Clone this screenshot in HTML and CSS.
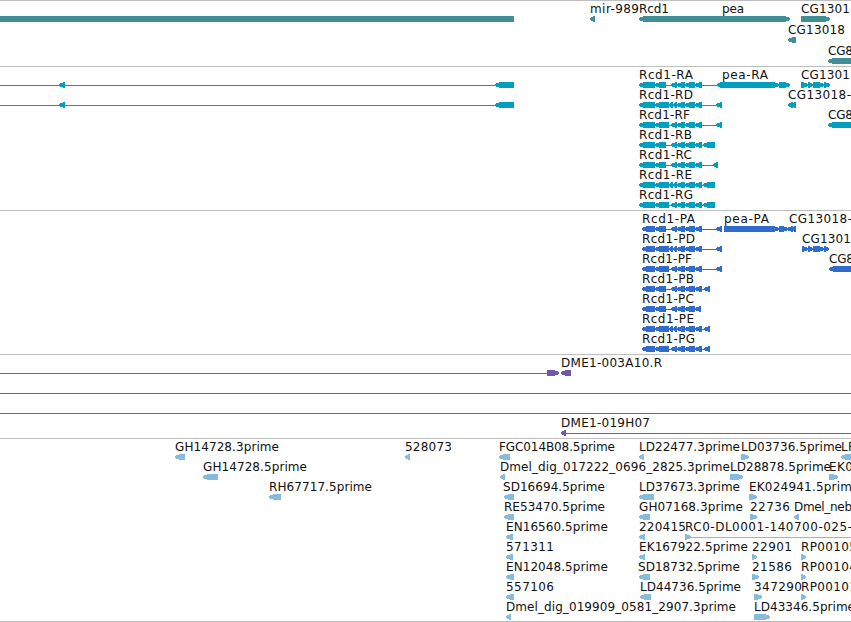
FILE: index.html
```
<!DOCTYPE html>
<html lang="en">
  <head>
    <meta charset="UTF-8" />
    <meta name="viewport" content="width=device-width, initial-scale=1.0" />
    <title>Genome Browser</title>
    <link rel="stylesheet" href="styles.css">
  </head>
  <body>
    <div class="browser" id="browser"></div>
    <script src="tracks.js"></script>
  </body>
</html>
```

FILE: styles.css
```
body {
  margin: 0;
  background-color: #fff;
}
.browser {
  display: flex;
  flex-direction: column;
  width: 851px;
  height: 622px;
  overflow: hidden;
}
.track {
  display: block;
  flex: none;
  width: 851px;
  box-sizing: border-box;
  border-top: 1px solid #bebebe;
  overflow: hidden;
}
.track:last-child {
  border-bottom: 1px solid #bebebe;
}
.track text {
  font-family: "DejaVu Sans", sans-serif;
  font-size: 12px;
  fill: #111;
}
.glyph {
  shape-rendering: crispEdges;
}
.genes .glyph {
  fill: #408f96;
}
.transcripts .glyph {
  fill: #009fbf;
}
.proteins .glyph {
  fill: #306ccd;
}
.clones .glyph {
  fill: #7357a8;
}
.ests .glyph {
  fill: #86bbdd;
}
```

FILE: tracks.js
```
// label: [row, x, text, width]
// span:  [row, start, end, direction]  "<" left, ">" right, "x" both, "=" box
// line:  [row, start, end]
const exonsA = [[655, 666], [671, 677], [677, 685], [685, 695], [695, 702]];
const exonsD = [[655, 669], [669, 673], [673, 677], [677, 685], [685, 695], [695, 702]];
const exonsF = [[655, 669], [671, 677], [677, 685], [685, 695], [695, 702]];

function gene(row, start, exons, last) {
  return [[start, 655], ...exons, last].map(([a, b]) => [row, a, b, "<"]);
}

const tracks = [
  {
    name: "genes",
    height: 66,
    pitch: 21,
    labels: [
      [0, 590, "mir-989", 49], [0, 639, "Rcd1", 30], [0, 722, "pea", 22],
      [0, 801, "CG1301", 49], [1, 788, "CG13018", 57], [2, 828, "CG8", 25],
    ],
    lines: [],
    spans: [
      [0, 0, 514, "="], [0, 590, 595, "<"], [0, 639, 790, "x"],
      [0, 801, 830, ">"], [1, 788, 796, "<"], [2, 828, 870, "<"],
    ],
  },
  {
    name: "transcripts",
    height: 144,
    pitch: 20,
    labels: [
      [0, 639, "Rcd1-RA", 54], [1, 639, "Rcd1-RD", 54], [2, 639, "Rcd1-RF", 51],
      [3, 639, "Rcd1-RB", 53], [4, 639, "Rcd1-RC", 53], [5, 639, "Rcd1-RE", 53],
      [6, 639, "Rcd1-RG", 54], [0, 722, "pea-RA", 46], [0, 801, "CG1301", 49],
      [1, 788, "CG13018-", 63], [2, 828, "CG8", 25],
    ],
    lines: [
      [0, 0, 514], [1, 0, 514], [0, 640, 720], [1, 640, 720], [2, 640, 720],
      [3, 640, 714], [4, 640, 717], [5, 640, 714], [6, 640, 714],
    ],
    spans: [
      [0, 59, 65, "<"], [1, 59, 65, "<"], [0, 495, 514, "<"], [1, 495, 514, "<"],
      ...gene(0, 639, exonsA, [717, 722]),
      ...gene(1, 639, exonsD, [716, 722]),
      ...gene(2, 639, exonsF, [716, 722]),
      ...gene(3, 639, exonsA, [703, 715]),
      ...gene(4, 639, exonsA, [713, 718]),
      ...gene(5, 639, exonsD, [703, 715]),
      ...gene(6, 639, exonsF, [703, 715]),
      [0, 717, 779, "x"], [0, 779, 790, ">"],
      [0, 801, 808, ">"], [0, 808, 813, ">"], [0, 813, 824, ">"], [0, 824, 830, ">"],
      [1, 788, 793, "<"], [1, 792, 796, "<"], [2, 828, 870, "<"],
    ],
  },
  {
    name: "proteins",
    height: 144,
    pitch: 20,
    labels: [
      [0, 642, "Rcd1-PA", 53], [1, 642, "Rcd1-PD", 53], [2, 642, "Rcd1-PF", 50],
      [3, 642, "Rcd1-PB", 52], [4, 642, "Rcd1-PC", 52], [5, 642, "Rcd1-PE", 52],
      [6, 642, "Rcd1-PG", 53], [0, 724, "pea-PA", 45], [0, 789, "CG13018-", 63],
      [1, 802, "CG1301", 49], [2, 829, "CG8", 25],
    ],
    lines: [
      [0, 643, 720], [1, 643, 720], [2, 643, 720], [3, 643, 709],
      [4, 643, 700], [5, 643, 709], [6, 643, 709],
    ],
    spans: [
      ...gene(0, 642, exonsA, [716, 722]),
      ...gene(1, 642, exonsD, [716, 722]),
      ...gene(2, 642, exonsF, [716, 722]),
      ...gene(3, 642, exonsA, [704, 710]),
      ...gene(4, 642, exonsA.slice(0, 4), [695, 701]),
      ...gene(5, 642, exonsD, [704, 710]),
      ...gene(6, 642, exonsF, [704, 710]),
      [0, 724, 779, ">"], [0, 779, 788, ">"], [0, 787, 793, "<"], [0, 791, 796, "<"],
      [1, 802, 808, ">"], [1, 808, 813, ">"], [1, 813, 824, ">"], [1, 824, 829, ">"],
      [2, 829, 870, "<"],
    ],
  },
  {
    name: "clones",
    height: 84,
    pitch: 20,
    labels: [[0, 561, "DME1-003A10.R", 101], [3, 561, "DME1-019H07", 89]],
    lines: [[0, 0, 547], [1, 0, 851], [2, 0, 851], [3, 561, 851]],
    spans: [[0, 547, 559, ">"], [0, 561, 571, "<"], [3, 561, 566, "<"]],
  },
  {
    name: "ests",
    height: 184,
    pitch: 20,
    labels: [
      [0, 175, "GH14728.3prime", 104], [1, 203, "GH14728.5prime", 104],
      [2, 269, "RH67717.5prime", 103], [0, 405, "528073", 47],
      [0, 499, "FGC014B08.5prime", 116], [1, 500, "Dmel_dig_017222_0696_2825.3prime", 230],
      [2, 503, "SD16694.5prime", 102], [3, 504, "RE53470.5prime", 101],
      [4, 506, "EN16560.5prime", 102], [5, 506, "571311", 48],
      [6, 506, "EN12048.5prime", 102], [7, 506, "557106", 48],
      [8, 506, "Dmel_dig_019909_0581_2907.3prime", 230],
      [0, 639, "LD22477.3prime", 101], [0, 741, "LD03736.5prime", 101], [0, 841, "LF", 14],
      [1, 730, "LD28878.5prime", 101], [1, 829, "EK0", 24],
      [2, 639, "LD37673.3prime", 101], [2, 749, "EK024941.5prim", 103],
      [3, 639, "GH07168.3prime", 104], [3, 750, "22736", 40], [3, 794, "Dmel_neb", 58],
      [4, 639, "220415", 47], [4, 685, "RC0-DL0001-140700-025-", 167],
      [5, 639, "EK167922.5prime", 109], [5, 752, "22901", 40], [5, 801, "RP00105", 56],
      [6, 638, "SD18732.5prime", 102], [6, 752, "21586", 40], [6, 801, "RP00104", 56],
      [7, 640, "LD44736.5prime", 101], [7, 754, "347290", 48], [7, 801, "RP00101", 56],
      [8, 754, "LD43346.5prime", 101],
    ],
    lines: [[4, 690, 851]],
    spans: [
      [0, 175, 185, "<"], [1, 203, 218, "<"], [2, 269, 281, "<"], [0, 405, 410, "<"],
      [0, 499, 510, "<"], [1, 500, 505, "<"], [2, 504, 514, "<"], [3, 504, 514, "<"],
      [4, 506, 513, "<"], [5, 506, 513, "<"], [6, 506, 514, "<"], [7, 506, 514, "<"],
      [8, 506, 511, "<"], [0, 639, 644, "<"], [0, 741, 749, ">"], [0, 841, 870, "<"],
      [1, 730, 743, ">"], [1, 829, 838, ">"], [2, 639, 654, "<"], [2, 749, 757, ">"],
      [3, 639, 650, "<"], [3, 750, 757, ">"], [3, 794, 799, "<"], [4, 639, 645, "<"],
      [4, 685, 691, ">"], [5, 639, 645, "<"], [5, 752, 757, ">"], [5, 801, 806, ">"],
      [6, 639, 650, "<"], [6, 752, 759, ">"], [6, 801, 806, ">"], [7, 640, 651, "<"],
      [7, 754, 762, ">"], [7, 801, 806, ">"], [8, 754, 770, ">"],
    ],
  },
];

// arrow heads end in a blunt tip two pixels high
function spanPath(start, end, y, dir) {
  const head = Math.min(5, end - start - 1);
  const left = dir === "<" || dir === "x";
  const right = dir === ">" || dir === "x";
  let d = left
    ? `M${start} ${y + 4}V${y + 2}L${start + head} ${y}`
    : `M${start} ${y + 6}V${y}`;
  d += right
    ? `H${end - head}L${end} ${y + 2}V${y + 4}L${end - head} ${y + 6}`
    : `H${end}V${y + 6}`;
  return d + (left ? `H${start + head}Z` : "Z");
}

function drawTrack(track) {
  // the top border takes the first pixel of every track
  let out = "";
  for (const [row, start, end] of track.lines) {
    const y = row * track.pitch + 18;
    out += `<rect class="glyph" x="${start}" y="${y}" width="${end - start}" height="1"/>`;
  }
  for (const [row, start, end, dir] of track.spans) {
    const y = row * track.pitch + 15;
    out += `<path class="glyph" d="${spanPath(start, end, y, dir)}"/>`;
  }
  for (const [row, x, text, width] of track.labels) {
    const y = row * track.pitch + 12;
    out += `<text x="${x}" y="${y}" textLength="${width}">${text}</text>`;
  }
  return `<svg class="track ${track.name}" height="${track.height}">${out}</svg>`;
}

document.getElementById("browser").innerHTML = tracks.map(drawTrack).join("");
```
